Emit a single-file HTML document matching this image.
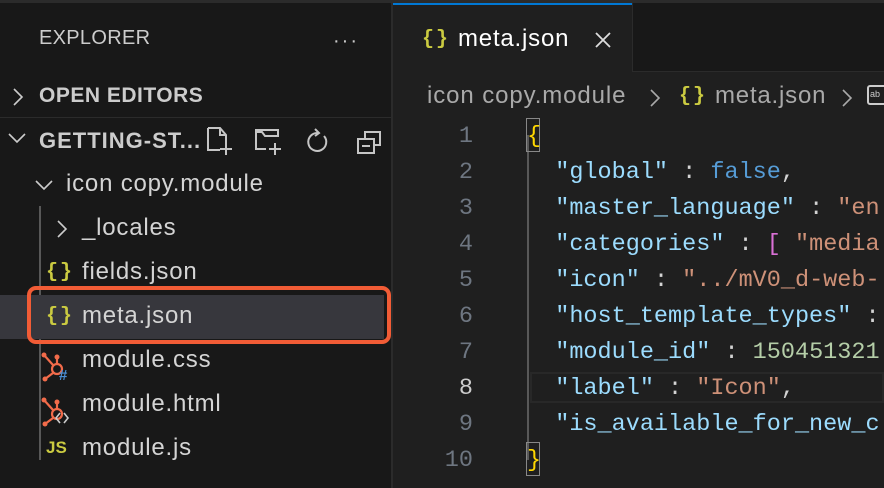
<!DOCTYPE html>
<html><head><meta charset="utf-8"><style>
*{margin:0;padding:0;box-sizing:border-box}
body{width:884px;height:488px;background:#181818;overflow:hidden;position:relative;font-family:"Liberation Sans",sans-serif;color:#cccccc}
.abs{position:absolute;white-space:nowrap}
.side{font-size:24px;letter-spacing:0.8px;color:#d4d4d4}
.mono{font-family:"Liberation Mono","DejaVu Sans Mono",monospace;font-size:23.5px}
.k{color:#9cdcfe}.s{color:#ce9178}.b{color:#569cd6}.n{color:#b5cea8}.p{color:#d4d4d4}
.ln{color:#6e7681;font-family:"Liberation Mono",monospace;font-size:23.5px;width:60px;text-align:right}
.brace{color:#cbcb41;font-weight:bold;font-family:"Liberation Mono",monospace;font-size:20px;letter-spacing:2px}
</style></head><body>
<div class="abs" style="left:0;top:0;width:884px;height:3px;background:#2b2b2b"></div>
<div class="abs" style="left:391px;top:0;width:2px;height:488px;background:#2b2b2b"></div>
<div class="abs side" style="left:39px;top:27px;font-size:20px;letter-spacing:0.3px;color:#cccccc">EXPLORER</div>
<div class="abs" style="left:333px;top:30px;font-size:20px;letter-spacing:2px;color:#ccc">···</div>
<svg class="abs" style="left:10px;top:86px" width="16" height="22"><path d="M4 3l8 8-8 8" stroke="#ccc" stroke-width="1.6" fill="none"/></svg>
<div class="abs" style="left:39px;top:84px;font-size:21px;letter-spacing:0.5px;font-weight:bold;color:#cccccc">OPEN EDITORS</div>
<div class="abs" style="left:0;top:117px;width:391px;height:1px;background:#2b2b2b"></div>
<svg class="abs" style="left:6px;top:130px" width="22" height="16"><path d="M3 4l8 8 8-8" stroke="#ccc" stroke-width="1.6" fill="none"/></svg>
<div class="abs" style="left:39px;top:128px;font-size:22px;letter-spacing:1px;font-weight:bold;color:#cccccc">GETTING-ST...</div>
<svg class="abs" style="left:205px;top:125px" width="180" height="36" fill="none" stroke="#c5c5c5" stroke-width="2">
<path d="M3 3h12l6 7v10M3 3v22h12M3 3"/><path d="M15 3v7h6"/><path d="M21 18v12M15 24h12"/>
<path d="M51 5h22v6H60l-3-4H51zM51 5v19h10"/><path d="M70 18v12M64 24h12"/>
<path d="M119 11a9 9 0 1 1-6-3"/><path d="M110 4l4 4-4 3"/>
<path d="M160 13v-6h15v13h-6M153 14h16v14h-16z"/><path d="M157 21h8"/>
</svg>
<svg class="abs" style="left:33px;top:177px" width="22" height="16"><path d="M3 4l8 8 8-8" stroke="#ccc" stroke-width="1.6" fill="none"/></svg>
<div class="abs side" style="left:66px;top:170px">icon copy.module</div>
<div class="abs" style="left:39px;top:206px;width:2px;height:254px;background:#585858"></div>
<svg class="abs" style="left:54px;top:218px" width="16" height="22"><path d="M4 3l8 8-8 8" stroke="#ccc" stroke-width="1.6" fill="none"/></svg>
<div class="abs side" style="left:82px;top:214px">_locales</div>
<div class="abs brace" style="left:46px;top:261px">{}</div>
<div class="abs side" style="left:82px;top:258px">fields.json</div>
<div class="abs" style="left:0;top:295px;width:384px;height:44px;background:#37373d"></div>
<div class="abs" style="left:27px;top:286px;width:364px;height:58px;border:4px solid #f25c36;border-radius:9px"></div>
<div class="abs brace" style="left:46px;top:305px">{}</div>
<div class="abs side" style="left:82px;top:302px">meta.json</div>
<svg class="abs" style="left:38px;top:350px" width="34" height="100">
<g stroke="#f26b4a" stroke-width="2.2" fill="none"><circle cx="19" cy="19" r="5"/><path d="M6 5l9 10M19 8v6M15 23l-8 6"/><circle cx="19" cy="64" r="5"/><path d="M6 50l9 10M19 53v6M15 68l-8 6"/></g>
<g fill="#f26b4a"><circle cx="6" cy="5" r="2.5"/><circle cx="19" cy="7" r="2.5"/><circle cx="7" cy="29" r="2.5"/><circle cx="6" cy="50" r="2.5"/><circle cx="19" cy="52" r="2.5"/><circle cx="7" cy="74" r="2.5"/></g>
<text x="21" y="30" font-family="Liberation Sans" font-weight="bold" font-size="15" fill="#4b8fd6">#</text>
<path d="M22 63l-4 5 4 5M26 63l4 5-4 5" stroke="#ccc" stroke-width="1.6" fill="none"/>
</svg>
<div class="abs side" style="left:82px;top:346px">module.css</div>
<div class="abs side" style="left:82px;top:390px">module.html</div>
<div class="abs" style="left:46px;top:438px;color:#cbcb41;font-weight:bold;font-size:17px">JS</div>
<div class="abs side" style="left:82px;top:434px">module.js</div>
<div class="abs" style="left:393px;top:72px;width:491px;height:416px;background:#1f1f1f"></div>
<div class="abs" style="left:393px;top:3px;width:239px;height:69px;background:#1f1f1f;border-top:2px solid #0078d4"></div>
<div class="abs" style="left:632px;top:71px;width:252px;height:1px;background:#2b2b2b"></div>
<div class="abs" style="left:632px;top:3px;width:1px;height:69px;background:#2b2b2b"></div>
<div class="abs brace" style="left:422px;top:28px">{}</div>
<div class="abs" style="left:458px;top:25px;font-size:24px;letter-spacing:0.8px;color:#ffffff">meta.json</div>
<svg class="abs" style="left:594px;top:31px" width="18" height="18"><path d="M2 2l14 14M16 2L2 16" stroke="#ddd" stroke-width="1.8"/></svg>
<div class="abs" style="left:427px;top:82px;font-size:24px;letter-spacing:0.9px;color:#a9a9a9">icon copy.module</div>
<svg class="abs" style="left:648px;top:87px" width="14" height="22"><path d="M3 3l8 8-8 8" stroke="#a9a9a9" stroke-width="1.6" fill="none"/></svg>
<div class="abs brace" style="left:679px;top:85px">{}</div>
<div class="abs" style="left:715px;top:82px;font-size:24px;letter-spacing:0.8px;color:#a9a9a9">meta.json</div>
<svg class="abs" style="left:840px;top:87px" width="14" height="22"><path d="M3 3l8 8-8 8" stroke="#a9a9a9" stroke-width="1.6" fill="none"/></svg>
<div class="abs" style="left:867px;top:85px;width:20px;height:20px;border:2px solid #ccc;border-radius:3px;font-size:9px;color:#ccc;padding:2px 1px">ab</div>
<div class="abs" style="left:530px;top:372px;width:354px;height:31px;border:2px solid #282828"></div>
<div class="abs" style="left:527px;top:135px;width:2px;height:325px;background:#585858"></div>
<div class="abs" style="left:526px;top:118px;width:14px;height:34px;border:1px solid #888"></div>
<div class="abs" style="left:526px;top:442px;width:14px;height:34px;border:1px solid #888"></div>
<div class="abs" style="left:413px;top:119px;line-height:36px">
<div class="ln">1</div><div class="ln">2</div><div class="ln">3</div><div class="ln">4</div><div class="ln">5</div><div class="ln">6</div><div class="ln">7</div><div class="ln" style="color:#ccc">8</div><div class="ln">9</div><div class="ln">10</div>
</div>
<div class="abs mono p" style="left:527px;top:119px;line-height:36px;white-space:pre"><span style="color:#ffd700">{</span>
  <span class="k">"global"</span> : <span class="b">false</span>,
  <span class="k">"master_language"</span> : <span class="s">"en</span>
  <span class="k">"categories"</span> : <span style="color:#da70d6">[</span> <span class="s">"media</span>
  <span class="k">"icon"</span> : <span class="s">"../mV0_d-web-</span>
  <span class="k">"host_template_types"</span> :
  <span class="k">"module_id"</span> : <span class="n">150451321</span>
  <span class="k">"label"</span> : <span class="s">"Icon"</span>,
  <span class="k">"is_available_for_new_c</span>
<span style="color:#ffd700">}</span></div>
</body></html>
